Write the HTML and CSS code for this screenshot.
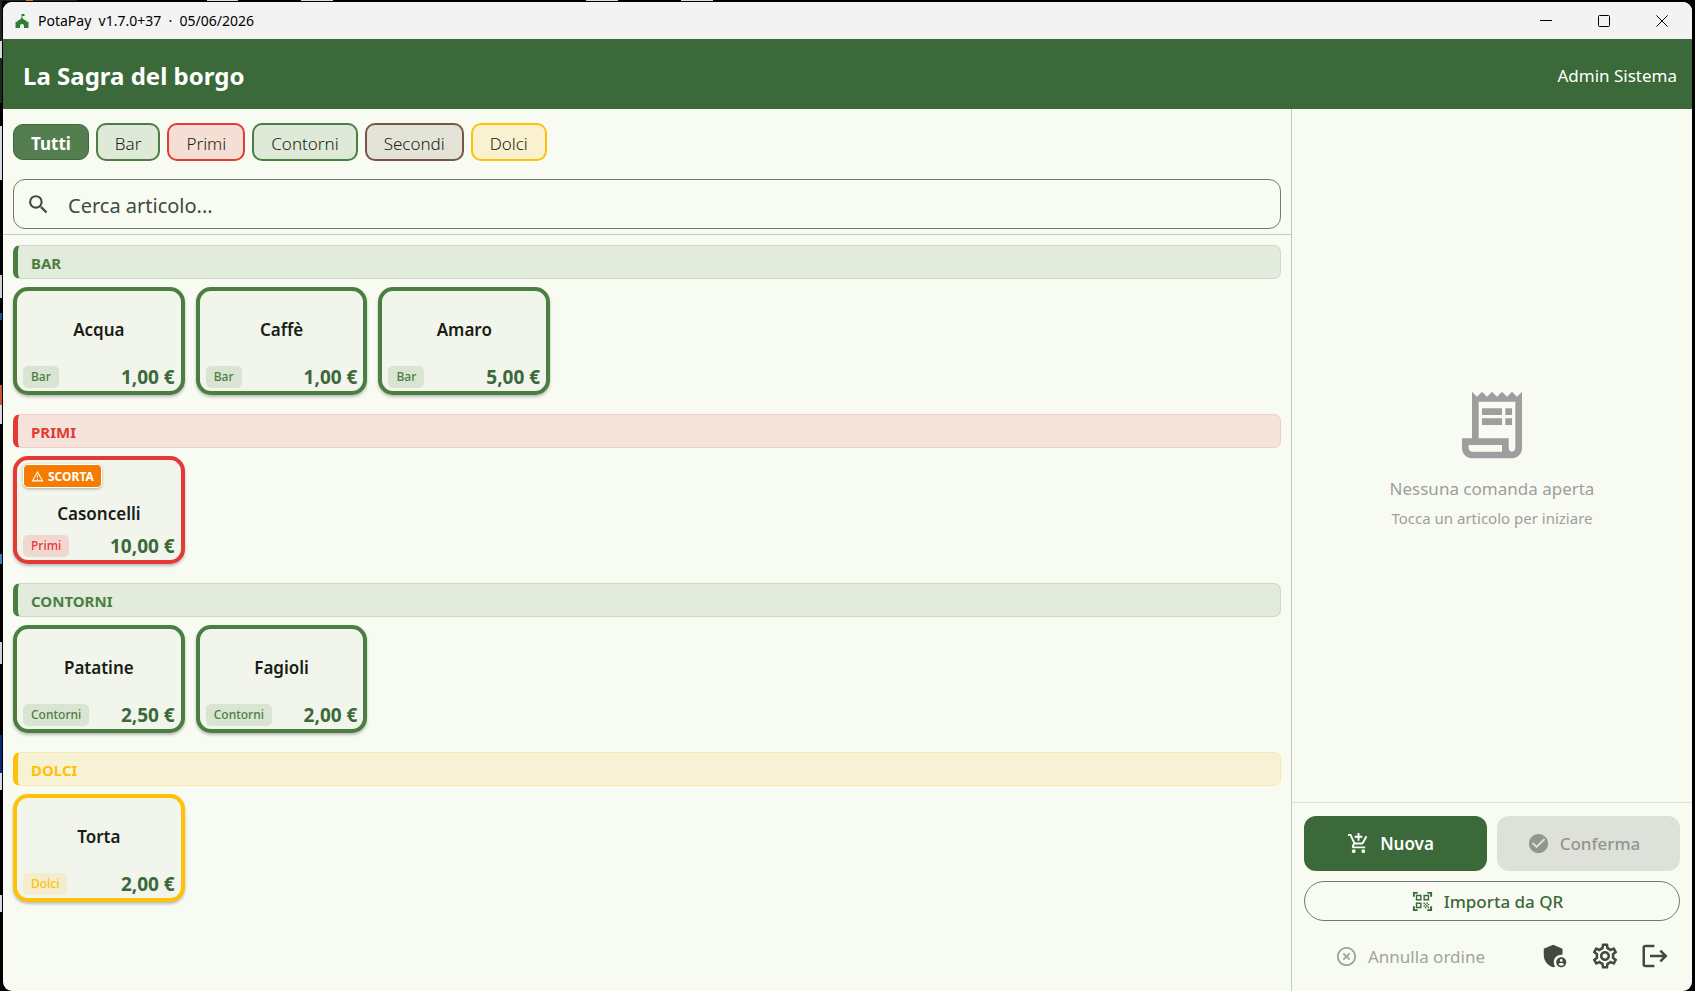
FILE: index.html
```html
<!DOCTYPE html>
<html lang="it">
<head>
  <meta charset="UTF-8" />
  <meta name="viewport" content="width=device-width, initial-scale=1" />
  <title>PotaPay</title>
  <link rel="stylesheet" href="styles.css">
</head>
<body>
  <div class="window">

    <div class="titlebar">
      <svg class="app-icon" viewBox="0 0 14 14" aria-hidden="true">
        <path fill="#2e7d32" d="M6.500 0H9.500V2H7.300V3.500C8 5.200 9.500 6.300 11.500 6.800V7.500L13.500 8V14H9V12A2 2 0 0 0 5 12V14H.5V8L2.500 7.500V6.800C4.500 6.300 5.800 5.200 6.500 3.500Z" />
      </svg>
      <span class="app-name">PotaPay&nbsp; v1.7.0+37&nbsp; ·&nbsp; 05/06/2026</span>
      <div class="window-buttons">
        <button type="button" aria-label="Riduci"><svg viewBox="0 0 12 12"><path d="M0 5.500h12" /></svg></button>
        <button type="button" aria-label="Ingrandisci"><svg viewBox="0 0 12 12"><rect x=".5" y=".5" width="11" height="11" rx="1" /></svg></button>
        <button type="button" aria-label="Chiudi"><svg viewBox="0 0 12 12"><path d="M.4.4l11.200 11.200M11.600.4L.4 11.600" /></svg></button>
      </div>
    </div>

    <header>
      <h1>La Sagra del borgo</h1>
      <span class="utente">Admin Sistema</span>
    </header>

    <div class="contenuto">
      <main>
        <div class="filtri">
          <div class="chips">
            <button type="button" class="chip attivo">Tutti</button>
            <button type="button" class="chip verde">Bar</button>
            <button type="button" class="chip rosso">Primi</button>
            <button type="button" class="chip verde">Contorni</button>
            <button type="button" class="chip marrone">Secondi</button>
            <button type="button" class="chip giallo">Dolci</button>
          </div>
          <label class="ricerca">
            <svg viewBox="0 0 24 24" aria-hidden="true"><path d="M15.500 14h-.79l-.28-.27A6.471 6.471 0 0 0 16 9.500 6.500 6.500 0 1 0 9.500 16c1.610 0 3.090-.59 4.230-1.570l.27.28v.79l5 4.990L20.490 19l-4.990-5zm-6 0C7.010 14 5 11.990 5 9.500S7.010 5 9.500 5 14 7.010 14 9.500 11.990 14 9.500 14z" /></svg>
            <input type="text" placeholder="Cerca articolo..." aria-label="Cerca articolo" />
          </label>
        </div>

        <div class="catalogo">
          <section class="verde">
            <h2>BAR</h2>
            <div class="griglia">
              <button type="button" class="articolo">
                <span class="nome">Acqua</span>
                <span class="riga"><span class="tag">Bar</span><span class="prezzo">1,00 €</span></span>
              </button>
              <button type="button" class="articolo">
                <span class="nome">Caffè</span>
                <span class="riga"><span class="tag">Bar</span><span class="prezzo">1,00 €</span></span>
              </button>
              <button type="button" class="articolo">
                <span class="nome">Amaro</span>
                <span class="riga"><span class="tag">Bar</span><span class="prezzo">5,00 €</span></span>
              </button>
            </div>
          </section>

          <section class="rosso">
            <h2>PRIMI</h2>
            <div class="griglia">
              <button type="button" class="articolo">
                <span class="scorta">
                  <svg viewBox="0 0 24 24" aria-hidden="true"><path d="M12 5.990L19.530 19H4.470L12 5.990M12 2L1 21h22L12 2zm1 14h-2v2h2v-2zm0-6h-2v4h2v-4z" /></svg>
                  SCORTA
                </span>
                <span class="nome">Casoncelli</span>
                <span class="riga"><span class="tag">Primi</span><span class="prezzo">10,00 €</span></span>
              </button>
            </div>
          </section>

          <section class="verde">
            <h2>CONTORNI</h2>
            <div class="griglia">
              <button type="button" class="articolo">
                <span class="nome">Patatine</span>
                <span class="riga"><span class="tag">Contorni</span><span class="prezzo">2,50 €</span></span>
              </button>
              <button type="button" class="articolo">
                <span class="nome">Fagioli</span>
                <span class="riga"><span class="tag">Contorni</span><span class="prezzo">2,00 €</span></span>
              </button>
            </div>
          </section>

          <section class="giallo">
            <h2>DOLCI</h2>
            <div class="griglia">
              <button type="button" class="articolo">
                <span class="nome">Torta</span>
                <span class="riga"><span class="tag">Dolci</span><span class="prezzo">2,00 €</span></span>
              </button>
            </div>
          </section>
        </div>
      </main>

      <aside>
        <div class="vuoto">
          <svg viewBox="0 0 24 24" aria-hidden="true"><path d="M19.500 3.500L18 2l-1.500 1.500L15 2l-1.500 1.500L12 2l-1.500 1.500L9 2 7.500 3.500 6 2v14H3v3c0 1.660 1.340 3 3 3h12c1.660 0 3-1.340 3-3V2l-1.500 1.500zM15 20H6c-.55 0-1-.45-1-1v-1h10v2zm4-1c0 .55-.45 1-1 1s-1-.45-1-1v-3H8V5h11v14z" /><path d="M9 7h6v2H9zM16 7h2v2h-2zM9 10h6v2H9zM16 10h2v2h-2z" /></svg>
          <p class="vuoto-titolo">Nessuna comanda aperta</p>
          <p class="vuoto-testo">Tocca un articolo per iniziare</p>
        </div>

        <div class="azioni">
          <div class="coppia">
            <button type="button" class="nuova">
              <svg viewBox="0 0 24 24" aria-hidden="true"><path d="M11 9h2V6h3V4h-3V1h-2v3H8v2h3v3zm-4 9c-1.100 0-1.990.9-1.990 2S5.900 22 7 22s2-.9 2-2-.9-2-2-2zm10 0c-1.100 0-1.990.9-1.990 2s.89 2 1.990 2 2-.9 2-2-.9-2-2-2zM8.100 13h7.450c.75 0 1.410-.41 1.750-1.030l3.860-7.010L19.420 4l-3.870 7H8.530L4.270 2H1v2h2l3.600 7.590-1.350 2.440C4.520 15.370 5.480 17 7 17h12v-2H7l1.100-2z" /></svg>
              Nuova
            </button>
            <button type="button" class="conferma" disabled>
              <svg viewBox="0 0 24 24" aria-hidden="true"><path d="M12 2C6.480 2 2 6.480 2 12s4.480 10 10 10 10-4.480 10-10S17.520 2 12 2zm-2 15l-5-5 1.410-1.410L10 14.170l7.590-7.590L19 8l-9 9z" /></svg>
              Conferma
            </button>
          </div>
          <button type="button" class="importa">
            <svg viewBox="0 0 24 24" aria-hidden="true"><path d="M9.500 6.500v3h-3v-3h3M11 5H5v6h6V5zm-1.500 9.500v3h-3v-3h3M11 13H5v6h6v-6zm6.500-6.500v3h-3v-3h3M19 5h-6v6h6V5zm-6 8h1.500v1.500H13V13zm1.500 1.500H16V16h-1.500v-1.500zM16 13h1.500v1.500H16V13zm-3 3h1.500v1.500H13V16zm1.500 1.500H16V19h-1.500v-1.500zM16 16h1.500v1.500H16V16zm1.500-1.500H19V16h-1.500v-1.500zm0 3H19V19h-1.500v-1.500zM22 7h-2V4h-3V2h5v5zm0 15v-5h-2v3h-3v2h5zM2 22h5v-2H4v-3H2v5zM2 2v5h2V4h3V2H2z" /></svg>
            Importa da QR
          </button>
          <div class="piede">
            <button type="button" class="annulla" disabled>
              <svg viewBox="0 0 24 24" aria-hidden="true"><path d="M14.590 8L12 10.590 9.410 8 8 9.410 10.590 12 8 14.590 9.410 16 12 13.410 14.590 16 16 14.590 13.410 12 16 9.410 14.590 8zM12 2C6.470 2 2 6.470 2 12s4.470 10 10 10 10-4.470 10-10S17.530 2 12 2zm0 18c-4.410 0-8-3.590-8-8s3.590-8 8-8 8 3.590 8 8-3.590 8-8 8z" /></svg>
              Annulla ordine
            </button>
            <button type="button" class="icona" aria-label="Amministrazione">
              <svg viewBox="0 0 24 24"><path d="M17 11c.34 0 .67.04 1 .09V6.270L10.500 3 3 6.270v4.910c0 4.540 3.200 8.790 7.500 9.820.55-.13 1.080-.32 1.600-.55-.69-.98-1.100-2.170-1.100-3.450 0-3.310 2.690-6 6-6z" /><path d="M17 13c-2.210 0-4 1.790-4 4s1.790 4 4 4 4-1.790 4-4-1.790-4-4-4zm0 1.380c.62 0 1.120.51 1.120 1.120s-.51 1.120-1.120 1.120-1.120-.51-1.120-1.120.5-1.120 1.120-1.120zm0 5.370c-.93 0-1.740-.46-2.240-1.170.05-.72 1.510-1.080 2.240-1.080s2.190.36 2.240 1.080c-.5.71-1.310 1.170-2.240 1.170z" /></svg>
            </button>
            <button type="button" class="icona" aria-label="Impostazioni">
              <svg viewBox="0 0 24 24"><path d="M19.430 12.980c.04-.32.07-.64.07-.98 0-.34-.03-.66-.07-.98l2.110-1.650c.19-.15.24-.42.12-.64l-2-3.460c-.09-.16-.26-.25-.44-.25-.06 0-.12.01-.17.030l-2.490 1c-.52-.4-1.080-.73-1.690-.98l-.38-2.650C14.460 2.180 14.250 2 14 2h-4c-.25 0-.46.18-.49.42l-.38 2.650c-.61.25-1.170.59-1.690.98l-2.490-1c-.06-.02-.12-.03-.18-.03-.17 0-.34.09-.43.25l-2 3.460c-.13.22-.07.49.12.64l2.110 1.650c-.04.32-.07.65-.07.98 0 .33.03.66.07.98l-2.110 1.650c-.19.15-.24.42-.12.64l2 3.460c.09.16.26.25.44.25.06 0 .12-.01.17-.03l2.490-1c.52.4 1.080.73 1.690.98l.38 2.650c.03.24.24.42.49.42h4c.25 0 .46-.18.49-.42l.38-2.650c.61-.25 1.170-.59 1.690-.98l2.490 1c.06.02.12.03.18.03.17 0 .34-.09.43-.25l2-3.460c.12-.22.07-.49-.12-.64l-2.110-1.650zm-1.980-1.710c.04.31.05.52.05.73 0 .21-.02.43-.05.73l-.14 1.130.89.7 1.080.84-.7 1.210-1.270-.51-1.040-.42-.9.680c-.43.32-.84.56-1.250.73l-1.060.43-.16 1.130-.2 1.350h-1.400l-.19-1.350-.16-1.130-1.060-.43c-.43-.18-.83-.41-1.230-.71l-.91-.7-1.060.43-1.270.51-.7-1.210 1.080-.84.89-.7-.14-1.130c-.03-.31-.05-.54-.05-.74s.02-.43.05-.73l.14-1.130-.89-.7-1.080-.84.7-1.210 1.270.51 1.040.42.9-.68c.43-.32.84-.56 1.250-.73l1.060-.43.16-1.130.2-1.350h1.390l.19 1.350.16 1.130 1.060.43c.43.18.83.41 1.230.71l.91.7 1.060-.43 1.270-.51.7 1.210-1.070.85-.89.7.14 1.130zM12 8c-2.210 0-4 1.790-4 4s1.790 4 4 4 4-1.790 4-4-1.790-4-4-4zm0 6c-1.100 0-2-.9-2-2s.9-2 2-2 2 .9 2 2-.9 2-2 2z" /></svg>
            </button>
            <button type="button" class="icona" aria-label="Esci">
              <svg viewBox="0 0 24 24"><path d="M11.500 3H4.500C3 3 2 3.700 2 5v14c0 1.300 1 2 2.500 2h7v-2H4V5h7.500V3z" /><path d="M17 7l-1.400 1.400 2.600 2.600H8v2h10.200l-2.600 2.600L17 17l5-5-5-5z" /></svg>
            </button>
          </div>
        </div>
      </aside>
    </div>
  </div>
</body>
</html>
```

FILE: styles.css
```css
* {
  box-sizing: border-box;
}

/* lo sfondo del desktop spunta ai bordi della finestra */
body {
  font-family: "Noto Sans", "Segoe UI", sans-serif;
  margin: 0;
  height: 100vh;
  padding: 2px 3px 0;
  background-color: #000;
  background-image:
    linear-gradient(to right, #222 26px, #e8750a 26px 33px, #222 33px 77px, #000 77px 207px, #ddd 207px 238px, #000 238px 301px, #ddd 301px 333px, #000 333px 586px, #ddd 586px 618px, #000 618px 681px, #ddd 681px 713px, #000 713px),
    linear-gradient(#222 41px, #d8d8e0 41px 58px, #222 58px 103px, #000 103px 126px, #d8d8e0 126px 180px, #000 180px 275px, #d0d0d4 275px 298px, #000 298px 313px, #1c4fa0 313px 320px, #000 320px 385px, #c8582f 385px 405px, #d8d8e0 405px 424px, #000 424px 554px, #3b7cc4 554px 564px, #000 564px 642px, #d0d0d4 642px 664px, #000 664px 735px, #0a2a78 735px 773px, #d8d8e0 773px 790px, #000 790px 895px, #d8d8e0 895px 912px, #000 912px);
  background-size: 100% 1px, 2px 100%;
  background-repeat: no-repeat;
  color: #191d17;
}

button {
  font-family: inherit;
  margin: 0;
  padding: 0;
  border: none;
  background: none;
  color: inherit;
  cursor: pointer;
}

svg {
  fill: currentColor;
  flex-shrink: 0;
}

.window {
  display: flex;
  flex-direction: column;
  height: 100%;
  background-color: #f8fbf2;
  border-radius: 9px;
  overflow: hidden;
}

/* barra del titolo */
.titlebar {
  display: flex;
  align-items: center;
  height: 37px;
  padding-left: 12px;
  background-color: #f3f3f3;
  color: #000;
  font-size: 14px;
}

.app-icon {
  width: 14px;
  height: 14px;
  margin-right: 9px;
}

.window-buttons {
  display: flex;
  margin-left: auto;
  padding-right: 1px;
}

.window-buttons button {
  display: flex;
  align-items: center;
  justify-content: center;
  width: 58px;
  height: 36px;
}

.window-buttons svg {
  width: 12px;
  height: 12px;
  fill: none;
  stroke: #000;
}

header {
  display: flex;
  align-items: center;
  justify-content: space-between;
  height: 70px;
  padding: 2px 15px 0 20px;
  background-color: #3b6939;
  color: #fff;
}

header h1 {
  margin: 0;
  font-size: 24px;
  font-weight: 700;
}

.utente {
  font-size: 17px;
}

.contenuto {
  display: flex;
  flex: 1;
  min-height: 0;
}

main {
  flex: 1;
  min-width: 0;
  overflow: hidden;
}

/* colori delle categorie */
.verde {
  --colore: #4a7f41;
  --chiaro: #dee9d8;
  --fascia: #e2ebdc;
  --bordo: #cddcc7;
  --tag: #d9e4d3;
}

.rosso {
  --colore: #e53935;
  --chiaro: #f5dfd5;
  --fascia: #f5e3db;
  --bordo: #f3cdc6;
  --tag: #f0d8d1;
}

.marrone {
  --colore: #795548;
  --chiaro: #e4e3d8;
}

.giallo {
  --colore: #ffc107;
  --chiaro: #f9f1cf;
  --fascia: #f8f2d5;
  --bordo: #f9e9b0;
  --tag: #f4edcd;
}

.filtri {
  padding: 14px 10px 5px;
  border-bottom: 1px solid #c5cabf;
}

.chips {
  display: flex;
  align-items: center;
  gap: 7px;
  margin-bottom: 18px;
}

.chip {
  height: 38px;
  padding: 2px 17px 0;
  border: 2px solid var(--colore);
  border-radius: 10px;
  background-color: var(--chiaro);
  font-size: 17px;
  font-weight: 300;
}

.chip.attivo {
  height: 36px;
  border: 1px solid #3b6939;
  background-color: #557e50;
  color: #fff;
  font-weight: 700;
}

.ricerca {
  display: flex;
  align-items: center;
  height: 50px;
  padding: 0 12px;
  gap: 17px;
  border: 1px solid #72796f;
  border-radius: 12px;
  color: #424940;
}

.ricerca svg {
  width: 25px;
  height: 25px;
}

.ricerca input {
  flex: 1;
  padding: 3px 0 0;
  border: none;
  outline: none;
  background: none;
  font-family: inherit;
  font-size: 20px;
  color: inherit;
}

.ricerca input::placeholder {
  color: #424940;
  opacity: 1;
}

.catalogo {
  display: flex;
  flex-direction: column;
  gap: 19px;
  padding: 10px;
}

h2 {
  margin: 0 0 8px;
  height: 34px;
  padding-left: 13px;
  border: 1px solid var(--bordo);
  border-left: 5px solid var(--colore);
  border-radius: 7px;
  background-color: var(--fascia);
  color: var(--colore);
  font-size: 15px;
  line-height: 34px;
  font-weight: 700;
}

.griglia {
  display: grid;
  grid-template-columns: repeat(auto-fill, minmax(160px, 1fr));
  gap: 11px;
}

.articolo {
  position: relative;
  display: flex;
  flex-direction: column;
  height: 108px;
  padding: 5px 6px 3px;
  border: 4px solid var(--colore);
  border-radius: 15px;
  background-color: #f2f5ec;
  box-shadow: 0 2px 3px rgba(0, 0, 0, 0.25);
}

.nome {
  display: flex;
  flex: 1;
  align-items: center;
  justify-content: center;
  padding-bottom: 4px;
  font-size: 17px;
  font-weight: 600;
}

.scorta + .nome {
  padding: 26px 0 0;
}

.riga {
  display: flex;
  align-items: center;
  justify-content: space-between;
}

.tag {
  padding: 0 8px;
  border-radius: 5px;
  background-color: var(--tag);
  color: var(--colore);
  font-size: 12px;
  font-weight: 500;
  line-height: 22px;
}

.prezzo {
  color: #3b6939;
  font-size: 19px;
  line-height: 22px;
  font-weight: 700;
}

.scorta {
  position: absolute;
  top: 4px;
  left: 6px;
  display: flex;
  align-items: center;
  gap: 4px;
  height: 24px;
  padding: 0 7px;
  border: 1px solid #fff;
  border-radius: 5px;
  background-color: #f57c00;
  box-shadow: 0 1px 3px rgba(0, 0, 0, 0.3);
  color: #fff;
  font-size: 12px;
  font-weight: 700;
}

.scorta svg {
  width: 13px;
  height: 13px;
}

/* pannello comanda */
aside {
  display: flex;
  flex-direction: column;
  width: 401px;
  border-left: 1px solid #c2c9bd;
}

.vuoto {
  display: flex;
  flex: 1;
  flex-direction: column;
  align-items: center;
  justify-content: center;
  padding-top: 4px;
  color: #9e9e9e;
}

.vuoto svg {
  width: 80px;
  height: 80px;
}

.vuoto p {
  margin: 0;
}

.vuoto .vuoto-titolo {
  margin-top: 8px;
  font-size: 17px;
  line-height: 32px;
}

.vuoto .vuoto-testo {
  font-size: 15px;
  line-height: 26px;
}

.azioni {
  display: flex;
  flex-direction: column;
  gap: 10px;
  padding: 13px 12px 10px;
  border-top: 1px solid #dde2d8;
}

.azioni button {
  display: flex;
  align-items: center;
  justify-content: center;
  gap: 10px;
  padding-right: 10px;
  font-size: 17px;
  font-weight: 500;
}

.azioni svg {
  width: 23px;
  height: 23px;
}

.coppia {
  display: flex;
  gap: 10px;
}

.coppia button {
  flex: 1;
  height: 55px;
  border-radius: 12px;
}

.azioni .nuova {
  background-color: #3b6939;
  color: #fff;
  font-weight: 600;
}

.azioni .conferma {
  background-color: #dee1d9;
  color: #92968e;
}

.azioni .importa {
  height: 40px;
  border: 1px solid #72796f;
  border-radius: 20px;
  color: #3b6939;
}

.piede {
  display: flex;
  align-items: center;
}

.azioni .annulla {
  flex: 1;
  padding-right: 14px;
  color: #a0a59c;
  font-weight: 400;
}

.azioni .icona {
  width: 50px;
  height: 50px;
  padding: 0;
  color: #424940;
}

.azioni .icona svg {
  width: 30px;
  height: 30px;
}
```
